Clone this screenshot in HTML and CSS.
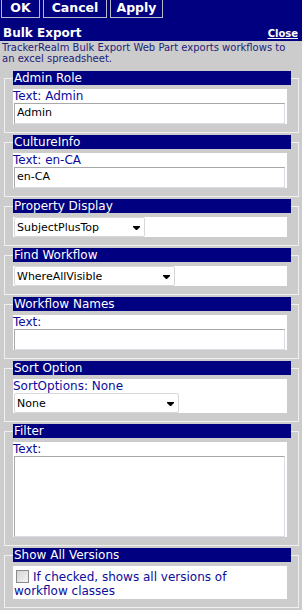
FILE: index.html
```html
<!DOCTYPE html>
<html>
<head>
<meta charset="utf-8">
<link rel="stylesheet" href="styles.css">
</head>
<body>
<div class="toolbar">
  <div class="buttons">
    <span class="btn btn-ok">OK</span>
    <span class="btn btn-cancel">Cancel</span>
    <span class="btn btn-apply">Apply</span>
  </div>
  <div class="titlerow">
    <span class="title">Bulk Export</span>
    <a class="close" href="#">Close</a>
  </div>
</div>
<p class="desc">TrackerRealm Bulk Export Web Part exports workflows to an excel spreadsheet.</p>

<fieldset class="sec">
  <legend>Admin Role</legend>
  <div class="body">
    <div class="label">Text: Admin</div>
    <div class="input">Admin</div>
  </div>
</fieldset>

<fieldset class="sec">
  <legend>CultureInfo</legend>
  <div class="body">
    <div class="label">Text: en-CA</div>
    <div class="input">en-CA</div>
  </div>
</fieldset>

<fieldset class="sec">
  <legend>Property Display</legend>
  <div class="body">
    <div class="select w130"><span>SubjectPlusTop</span><svg class="arrow" width="8" height="5" viewBox="0 0 8 5"><polygon points="0,0 7,0 7,1 4,4 3,4 0,1" fill="#000"/></svg></div>
  </div>
</fieldset>

<fieldset class="sec">
  <legend>Find Workflow</legend>
  <div class="body">
    <div class="select w160"><span>WhereAllVisible</span><svg class="arrow" width="8" height="5" viewBox="0 0 8 5"><polygon points="0,0 7,0 7,1 4,4 3,4 0,1" fill="#000"/></svg></div>
  </div>
</fieldset>

<fieldset class="sec">
  <legend>Workflow Names</legend>
  <div class="body">
    <div class="label">Text:</div>
    <div class="input"></div>
  </div>
</fieldset>

<fieldset class="sec">
  <legend>Sort Option</legend>
  <div class="body">
    <div class="label">SortOptions: None</div>
    <div class="select w164"><span>None</span><svg class="arrow" width="8" height="5" viewBox="0 0 8 5"><polygon points="0,0 7,0 7,1 4,4 3,4 0,1" fill="#000"/></svg></div>
  </div>
</fieldset>

<fieldset class="sec">
  <legend>Filter</legend>
  <div class="body">
    <div class="label">Text:</div>
    <div class="input textarea"></div>
  </div>
</fieldset>

<fieldset class="sec">
  <legend>Show All Versions</legend>
  <div class="body check">
    <span class="box"></span>If checked, shows all versions of<br>workflow classes
  </div>
</fieldset>
</body>
</html>
```

FILE: styles.css
```css
html, body {
  margin: 0;
  padding: 0;
  background: #cccccc;
  font-family: "DejaVu Sans", Verdana, sans-serif;
}

.toolbar {
  background: #000080;
  height: 41px;
  padding: 0 4px 0 1px;
  display: flex;
  flex-direction: column;
}

.buttons {
  display: flex;
  gap: 3px;
  height: 18px;
}

.btn {
  box-sizing: border-box;
  height: 18px;
  border: 1px solid #b8b8c8;
  border-top: none;
  color: #ffffff;
  font-weight: bold;
  font-size: 12.5px;
  line-height: 16px;
  text-align: center;
}
.btn-ok { width: 39px; }
.btn-cancel { width: 64px; }
.btn-apply { width: 53px; }

.titlerow {
  display: flex;
  justify-content: space-between;
  align-items: flex-end;
  flex: 1;
  padding-left: 2px;
  padding-bottom: 1px;
}

.title {
  color: #ffffff;
  font-weight: bold;
  font-size: 12px;
  line-height: 14px;
}

.close {
  color: #ffffff;
  font-weight: bold;
  font-size: 10px;
  line-height: 12px;
  text-decoration: underline;
}

.desc {
  margin: 0;
  padding: 2px 2px 0 2px;
  height: 28px;
  font-size: 10px;
  line-height: 10.5px;
  color: #22227a;
}

.sec {
  margin: 0 3px 2px 4px;
  padding: 4px 10px 8px 8px;
  border: 1px solid #f0f0f0;
  min-width: 0;
}

.sec legend {
  box-sizing: border-box;
  width: 278px;
  height: 14px;
  padding: 0 0 0 1px;
  margin: 0;
  background: #000080;
  color: #ffffff;
  font-size: 12px;
  line-height: 14px;
}

.body {
  background: #ffffff;
  width: 274px;
}

.label {
  color: #0c0c9c;
  font-size: 12px;
  line-height: 14px;
  height: 14px;
}

.input {
  box-sizing: border-box;
  margin-left: 1px;
  width: 271px;
  height: 21px;
  border-top: 1px solid #a8a8a8;
  border-left: 1px solid #a8a8a8;
  border-right: 1px solid #dcdce4;
  border-bottom: 1px solid #dcdce4;
  padding-left: 2px;
  font-size: 11px;
  line-height: 18px;
  color: #000000;
}

.textarea {
  height: 81px;
}

.select {
  box-sizing: border-box;
  margin-left: 1px;
  height: 20px;
  border: 1px solid #d8d8d8;
  border-radius: 2px;
  padding: 0 3px 0 2px;
  display: flex;
  align-items: center;
  justify-content: space-between;
  font-size: 11px;
  color: #000000;
}
.w130 { width: 131px; }
.w160 { width: 161px; }
.w164 { width: 165px; }

.arrow {
  display: block;
  margin-top: 2px;
}

.check {
  box-sizing: border-box;
  padding: 4px 0 1px 1px;
  color: #0c0c9c;
  font-size: 12px;
  line-height: 14px;
}

.box {
  display: inline-block;
  box-sizing: border-box;
  width: 13px;
  height: 13px;
  border: 1px solid #8a8a8a;
  background: linear-gradient(135deg, #d4d4d4, #f4f4f4);
  vertical-align: -2px;
  margin: 0 4px 0 2px;
}
```
